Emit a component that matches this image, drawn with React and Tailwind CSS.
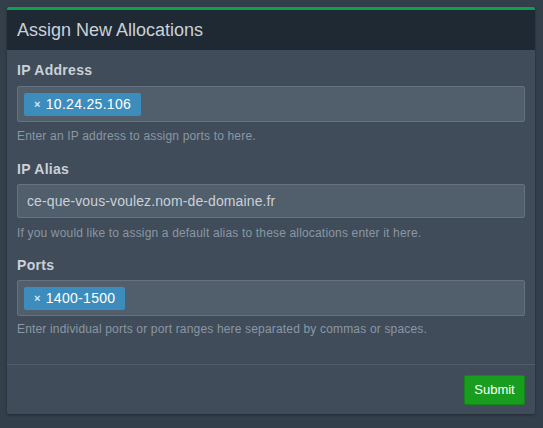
export default function App() {
    const field = "w-full border border-[#66727f] bg-[#515e6b] rounded-[2px]";
    const help = "text-[12px] tracking-[0.17px] text-[#8b97a4] leading-[16px]";
    const label = "block font-bold text-[14px] tracking-[0.3px] leading-[16px]";
    const tag = "inline-flex items-center h-[23px] px-[10px] bg-[#3c8dbc] rounded-[2px] text-white text-[14px] tracking-[0.3px]";
    return (
        <div
            className="min-h-screen bg-[#343f4c] px-[7px] pt-[7px] text-[14px] text-[#cad1d8]"
            style={{ fontFamily: '"Liberation Sans", Arial, sans-serif' }}
        >
            <div className="w-[528px] h-[407px] bg-[#404c59] border-t-[3px] border-[#0e9f51] shadow-[0_1px_3px_rgba(0,0,0,0.35)] rounded-[2px] flex flex-col">
                {/* header */}
                <div className="h-[40px] bg-[#1f2933] flex items-center px-[10px]">
                    <h3 className="text-[18px] text-[#cad1d8]">Assign New Allocations</h3>
                </div>

                {/* body */}
                <div className="px-[10px] pt-[12px] flex-1">
                    <label className={`${label} mb-[8px]`}>IP Address</label>
                    <div className={`${field} h-[36px] flex items-center px-[6px]`}>
                        <span className={tag}>
                            <span className="text-[11px] font-bold text-[#dbe7f0] mr-[5px]">×</span>
                            10.24.25.106
                        </span>
                    </div>
                    <p className={`${help} mt-[6px]`}>Enter an IP address to assign ports to here.</p>

                    <label className={`${label} mt-[17px] mb-[7px]`}>IP Alias</label>
                    <div className={`${field} h-[34px] flex items-center px-[9px] tracking-[0.11px]`}>
                        ce-que-vous-voulez.nom-de-domaine.fr
                    </div>
                    <p className={`${help} mt-[7px]`}>If you would like to assign a default alias to these allocations enter it here.</p>

                    <label className={`${label} mt-[16px] mb-[7px]`}>Ports</label>
                    <div className={`${field} h-[36px] flex items-center px-[6px]`}>
                        <span className={tag}>
                            <span className="text-[11px] font-bold text-[#dbe7f0] mr-[5px]">×</span>
                            1400-1500
                        </span>
                    </div>
                    <p className={`${help} mt-[5px]`}>Enter individual ports or port ranges here separated by commas or spaces.</p>
                </div>

                {/* footer */}
                <div className="border-t border-[#505c69] h-[50px] flex items-center justify-end px-[10px]">
                    <button className="h-[30px] w-[61px] bg-[#189d1f] border border-[#13861a] rounded-[2px] text-white text-[13px]">
                        Submit
                    </button>
                </div>
            </div>
        </div>
    );
}
